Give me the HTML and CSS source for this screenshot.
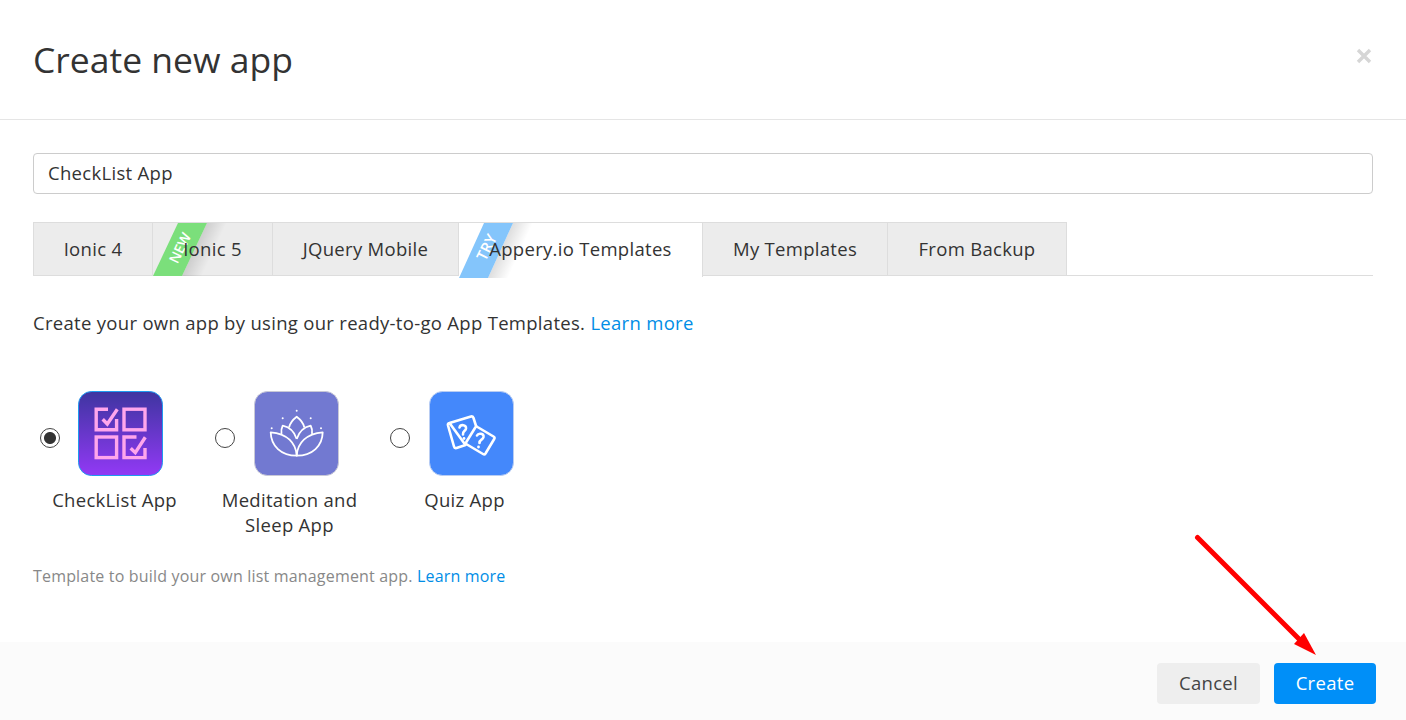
FILE: index.html
```html
<!DOCTYPE html>
<html lang="en">
<head>
<meta charset="utf-8">
<title>Create new app</title>
<link rel="stylesheet" href="styles.css">
</head>
<body>
<div class="dialog">
  <header class="head">
    <h1 class="title">Create new app</h1>
    <button class="close" aria-label="Close">
      <svg width="16" height="16" viewBox="0 0 16 16"><path d="M2 2 14 14M14 2 2 14" stroke="#d6d6d6" stroke-width="3.4" fill="none"/></svg>
    </button>
  </header>
  <main class="body">
    <input class="name" type="text" value="CheckList App">
    <nav class="tabs">
      <a class="tab t1">Ionic 4</a>
      <a class="tab t2">
        <svg class="ribbon" width="80" height="53" viewBox="0 0 80 53">
          <defs><linearGradient id="sg1" gradientUnits="userSpaceOnUse" x1="54" x2="74" y1="0" y2="0" gradientTransform="skewX(-25.2)"><stop offset="0" stop-color="#000" stop-opacity=".13"/><stop offset="1" stop-color="#000" stop-opacity="0"/></linearGradient></defs>
          <polygon points="29,53 54,0 75,0 50,53" fill="url(#sg1)"/>
          <polygon points="0,53 25,0 54,0 29,53" fill="#7bdf7b"/>
        </svg>
        <span class="flag">NEW</span><span class="tab-text">Ionic 5</span></a>
      <a class="tab t3">JQuery Mobile</a>
      <a class="tab t4 active">
        <svg class="ribbon" width="80" height="55" viewBox="0 0 80 55">
          <defs><linearGradient id="sg2" gradientUnits="userSpaceOnUse" x1="54" x2="74" y1="0" y2="0" gradientTransform="skewX(-24.4)"><stop offset="0" stop-color="#000" stop-opacity=".13"/><stop offset="1" stop-color="#000" stop-opacity="0"/></linearGradient></defs>
          <polygon points="29,55 54,0 75,0 50,55" fill="url(#sg2)"/>
          <polygon points="0,55 25,0 54,0 29,55" fill="#84c5fb"/>
        </svg>
        <span class="flag flag-try">TRY</span><span class="tab-text">Appery.io Templates</span></a>
      <a class="tab t5">My Templates</a>
      <a class="tab t6">From Backup</a>
    </nav>
    <p class="intro">Create your own app by using our ready-to-go App Templates. <a class="link">Learn more</a></p>
    <div class="templates">
      <label class="item">
        <span class="pick">
          <input class="radio" type="radio" name="tpl" checked>
          <svg class="icon icon-sel" width="85" height="85" viewBox="0 0 85 85">
            <defs><linearGradient id="pg" x1="0" x2="0" y1="0" y2="1"><stop offset="0" stop-color="#3e35a0"/><stop offset="1" stop-color="#9239f5"/></linearGradient></defs>
            <rect x=".5" y=".5" width="84" height="84" rx="13" fill="url(#pg)" stroke="#1f9bf0"/>
            <g fill="none" stroke="#ffa6ec" stroke-width="3.4">
              <path d="M38.600 28V38.800H18.200V18.200H30"/>
              <rect x="46" y="18.200" width="21" height="20.600"/>
              <rect x="18.200" y="46" width="20.400" height="20.600"/>
              <path d="M67 57V66.600H46V46H58.500"/>
              <path d="M24.700 28.300 29.300 33 39.300 18.300"/>
              <path d="M52.700 57.300 57.300 61.700 67.300 46.300"/>
            </g>
          </svg>
        </span>
        <span class="cap">CheckList App</span>
      </label>
      <label class="item">
        <span class="pick">
          <input class="radio" type="radio" name="tpl">
          <svg class="icon" width="85" height="85" viewBox="0 0 85 85">
            <rect x=".5" y=".5" width="84" height="84" rx="13" fill="#7279d1" stroke="#c9c9d6"/>
            <g fill="none" stroke="#fff" stroke-width="1.800" stroke-linejoin="round">
              <path d="M42.700 64.700C42 52 33 42.500 16.700 41.300 17 55 27 64.700 42.700 64.700Z"/>
              <path d="M42.700 64.700C43.400 52 52.500 42.500 68.700 41.300 68.400 55 58.500 64.700 42.700 64.700Z"/>
              <path d="M27.500 43C27 40 27.500 37 28.700 34.700 35 36 40.500 41 42.700 48"/>
              <path d="M58 43C58.500 40 58 37 56.700 34.700 50.400 36 45 41 42.700 48"/>
              <path d="M35 36.500C36 32 39 28.500 42.700 25.700 46.400 28.500 49.500 32 50.400 36.500"/>
            </g>
            <g fill="#fff"><circle cx="42.700" cy="19.700" r="1"/><circle cx="28.700" cy="27.300" r="1"/><circle cx="56.700" cy="27.300" r="1"/><circle cx="17.700" cy="37.300" r="1"/><circle cx="67" cy="37.300" r="1"/></g>
          </svg>
        </span>
        <span class="cap">Meditation and Sleep App</span>
      </label>
      <label class="item">
        <span class="pick">
          <input class="radio" type="radio" name="tpl">
          <svg class="icon" width="85" height="85" viewBox="0 0 85 85">
            <rect x=".5" y=".5" width="84" height="84" rx="13" fill="#4488fb" stroke="#b9cdf2"/>
            <g fill="none" stroke="#fff" stroke-width="2.600" stroke-linejoin="round" stroke-linecap="round">
              <path d="M20.500 32 42 25.500Q44 25 44.500 27L47.200 35.500M36.500 54 27.500 57Q25.500 57.500 25 55.500L19 34.500Q18.500 32.500 20.500 32Z"/>
              <path d="M48.500 36 64.500 45.500Q66.200 46.500 65.200 48L56.500 62.500Q55.500 64 54 63L38 53.500Q36.300 52.500 37.300 51L46 37Q47 35 48.500 36Z"/>
              <path d="M30.500 36.500C31.500 33 37.500 33.500 37 37.500 36.500 40.500 33.500 40 34 43.500"/>
              <path d="M48 44.500C49.500 41.500 55 42.500 54.500 46 54 49 50.500 48.500 50.500 52"/>
            </g>
            <circle cx="35" cy="47.500" r="1.400" fill="#fff"/>
            <circle cx="49.500" cy="56" r="1.400" fill="#fff"/>
          </svg>
        </span>
        <span class="cap">Quiz App</span>
      </label>
    </div>
    <p class="desc">Template to build your own list management app. <a class="link">Learn more</a></p>
  </main>
  <footer class="foot">
    <button class="btn btn-cancel">Cancel</button>
    <button class="btn btn-create">Create</button>
  </footer>
  <svg class="arrow" width="130" height="130" viewBox="0 0 130 130">
    <path d="M3.500 3.500 111 111" stroke="#f00" stroke-width="5" stroke-linecap="round" fill="none"/>
    <polygon points="122,121 100,110 110,99" fill="#f00"/>
  </svg>
</div>
</body>
</html>
```
FILE: styles.css
```css
* { box-sizing: border-box; }
html, body { margin: 0; height: 100%; }
body { background: #fff; color: #333; font-family: "Open Sans", sans-serif; font-size: 18.5px; letter-spacing: .3px; overflow: hidden; }
.dialog { position: relative; height: 720px; display: flex; flex-direction: column; }
.head { height: 120px; border-bottom: 1px solid #e5e5e5; padding: 0 33px; display: flex; align-items: center; justify-content: space-between; }
.title { margin: 0 0 1px; font-size: 35.5px; font-weight: 400; line-height: 1.2; letter-spacing: 0; color: #333; }
.close { border: 0; background: none; padding: 0; display: flex; margin: -7px 1.5px 0 0; }
.body { flex: 1; padding: 33px 33px 0; }
.name { display: block; width: 100%; height: 41px; border: 1px solid #ccc; border-radius: 4px; padding: 0 14px 2px; font: inherit; letter-spacing: inherit; color: #333; outline: 0; }
.tabs { display: flex; margin-top: 28px; height: 54px; border-bottom: 1px solid #ddd; }
.tab { position: relative; display: flex; align-items: center; justify-content: center; height: 54px; padding-bottom: 2px; background: #ececec; border: 1px solid #ddd; border-left-width: 0; color: #333; }
.t1 { width: 120px; border-left-width: 1px; }
.t2 { width: 120px; }
.t3 { width: 186px; }
.t4 { width: 244px; }
.t5 { width: 185px; }
.t6 { width: 179px; }
.active { background: #fff; border-bottom: 0; height: 55px; padding-bottom: 3px; }
.tab-text { position: relative; }
.ribbon { position: absolute; left: 0; top: 0; }
.flag { position: absolute; left: 9px; top: 17px; width: 36px; text-align: center; color: #fff; font-size: 14px; font-weight: 600; line-height: 16px; letter-spacing: 0; transform: rotate(-64deg); }
.flag-try { top: 16px; font-size: 15px; }
.intro { margin: 34px 0 0; line-height: 25px; }
.link { color: #008de6; text-decoration: none; }
.templates { display: flex; margin: 56px 0 0 -6px; }
.item { width: 175px; display: flex; flex-direction: column; align-items: center; }
.pick { width: 100%; display: flex; align-items: flex-start; gap: 19px; padding-left: 13px; }
.radio { appearance: none; width: 20px; height: 20px; margin: 37px 0 0; border: 1px solid #444; border-radius: 50%; background: #fff; flex: none; }
.radio:checked { background: radial-gradient(circle, #333 0 5.500px, #fff 6.500px); }
.icon { display: block; flex: none; }
.icon-sel { margin-left: -1px; }
.cap { width: 150px; margin-top: 11px; text-align: center; line-height: 25px; }
.desc { margin: 28px 0 0; font-size: 16px; line-height: 22px; letter-spacing: .18px; color: #888; }
.foot { height: 78px; background: #fbfbfb; display: flex; justify-content: flex-end; gap: 14px; padding: 21px 30px 0 0; }
.btn { height: 41px; border: 0; border-radius: 4px; font: inherit; letter-spacing: inherit; padding: 0 0 2px; }
.btn-cancel { width: 103px; background: #eee; color: #444; }
.btn-create { width: 102px; background: #008ff8; color: #fff; }
.arrow { position: absolute; left: 1194px; top: 534px; }
```
